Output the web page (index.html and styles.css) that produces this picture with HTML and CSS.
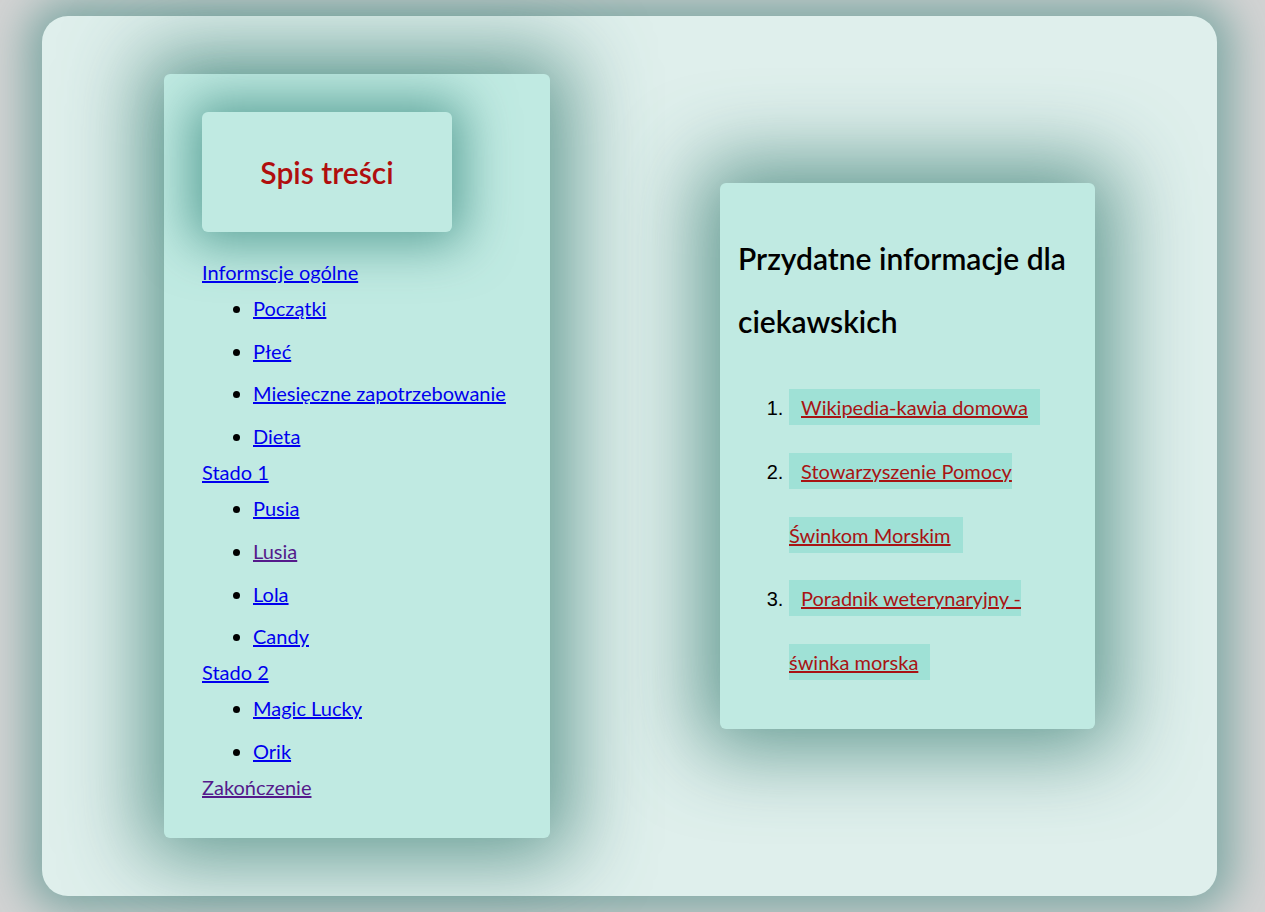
FILE: index.html
```html
<!DOCTYPE html>
<html lang="pl">
<head>
<meta charset="utf-8">
<title>Świnki morskie</title>
<link rel="stylesheet" href="styles.css">
</head>
<body>
<main class="page">
  <nav class="toc">
    <div class="toc-title">
      <h1>Spis treści</h1>
    </div>
    <ul class="toc-list">
      <li><a href="#" class="link">Informscje ogólne</a>
        <ul class="sub">
          <li><a href="#" class="link">Początki</a></li>
          <li><a href="#" class="link">Płeć</a></li>
          <li><a href="#" class="link">Miesięczne zapotrzebowanie</a></li>
          <li><a href="#" class="link">Dieta</a></li>
        </ul>
      </li>
      <li><a href="#" class="link">Stado 1</a>
        <ul class="sub">
          <li><a href="#" class="link">Pusia</a></li>
          <li><a href="#" class="link visited">Lusia</a></li>
          <li><a href="#" class="link">Lola</a></li>
          <li><a href="#" class="link">Candy</a></li>
        </ul>
      </li>
      <li><a href="#" class="link">Stado 2</a>
        <ul class="sub">
          <li><a href="#" class="link">Magic Lucky</a></li>
          <li><a href="#" class="link">Orik</a></li>
        </ul>
      </li>
      <li><a href="#" class="link visited">Zakończenie</a></li>
    </ul>
  </nav>

  <aside class="info">
    <h2>Przydatne informacje dla ciekawskich</h2>
    <ol class="info-list">
      <li><a href="#" class="ext">Wikipedia-kawia domowa</a></li>
      <li><a href="#" class="ext">Stowarzyszenie Pomocy Świnkom Morskim</a></li>
      <li><a href="#" class="ext">Poradnik weterynaryjny - świnka morska</a></li>
    </ol>
  </aside>
</main>
</body>
</html>
```

FILE: styles.css
```css
html, body {
  margin: 0;
  padding: 0;
}

body {
  background: #d2d3d3;
  font-family: Lato, "Liberation Sans", sans-serif;
  padding: 16px 48px 16px 42px;
  min-height: 880px;
}

.page {
  box-sizing: border-box;
  height: 880px;
  background: #dfefec;
  border-radius: 26px;
  box-shadow: 0 0 40px 16px #82aaa6;
  display: flex;
  justify-content: space-between;
  align-items: center;
  padding: 0 122px;
}

.toc {
  box-sizing: border-box;
  width: 386px;
  background: #c0eae2;
  border-radius: 6px;
  padding: 38px 38px 33px;
  box-shadow: 0 0 80px 20px rgba(50, 120, 110, 0.72);
}

.toc-title {
  width: 250px;
  height: 120px;
  box-sizing: border-box;
  background: #c0eae2;
  border-radius: 6px;
  display: flex;
  align-items: center;
  justify-content: center;
  box-shadow: 0 0 50px 12px rgba(60, 140, 130, 0.75);
}

.toc-title h1 {
  margin: 0;
  font-size: 30px;
  font-weight: 600;
  color: #b00e0e;
}

.toc-list {
  list-style: none;
  margin: 22px 0 0;
  padding: 0;
  font-size: 20px;
  line-height: 36px;
}

.sub {
  list-style: disc;
  margin: 0;
  padding-left: 51px;
  color: #000;
}

.sub li + li {
  margin-top: 6.7px;
}

.link {
  color: #0000ee;
}

.link.visited {
  color: #551a8b;
}

.info {
  box-sizing: border-box;
  width: 375px;
  background: #c0eae2;
  border-radius: 6px;
  padding: 21px 18px 14px;
  box-shadow: 0 0 80px 20px rgba(50, 120, 110, 0.72);
}

.info h2 {
  margin: 23px 0;
  font-size: 30px;
  font-weight: 600;
  line-height: 63px;
  color: #000;
}

.info-list {
  margin: 20px 0;
  padding-left: 51px;
  font-family: "Liberation Sans", Arial, sans-serif;
  font-size: 20px;
  line-height: 62.75px;
}

.ext {
  font-family: Lato, "Liberation Sans", sans-serif;
  color: #a81414;
  background: #9fe1d6;
  padding: 6px 12px;
}
```
